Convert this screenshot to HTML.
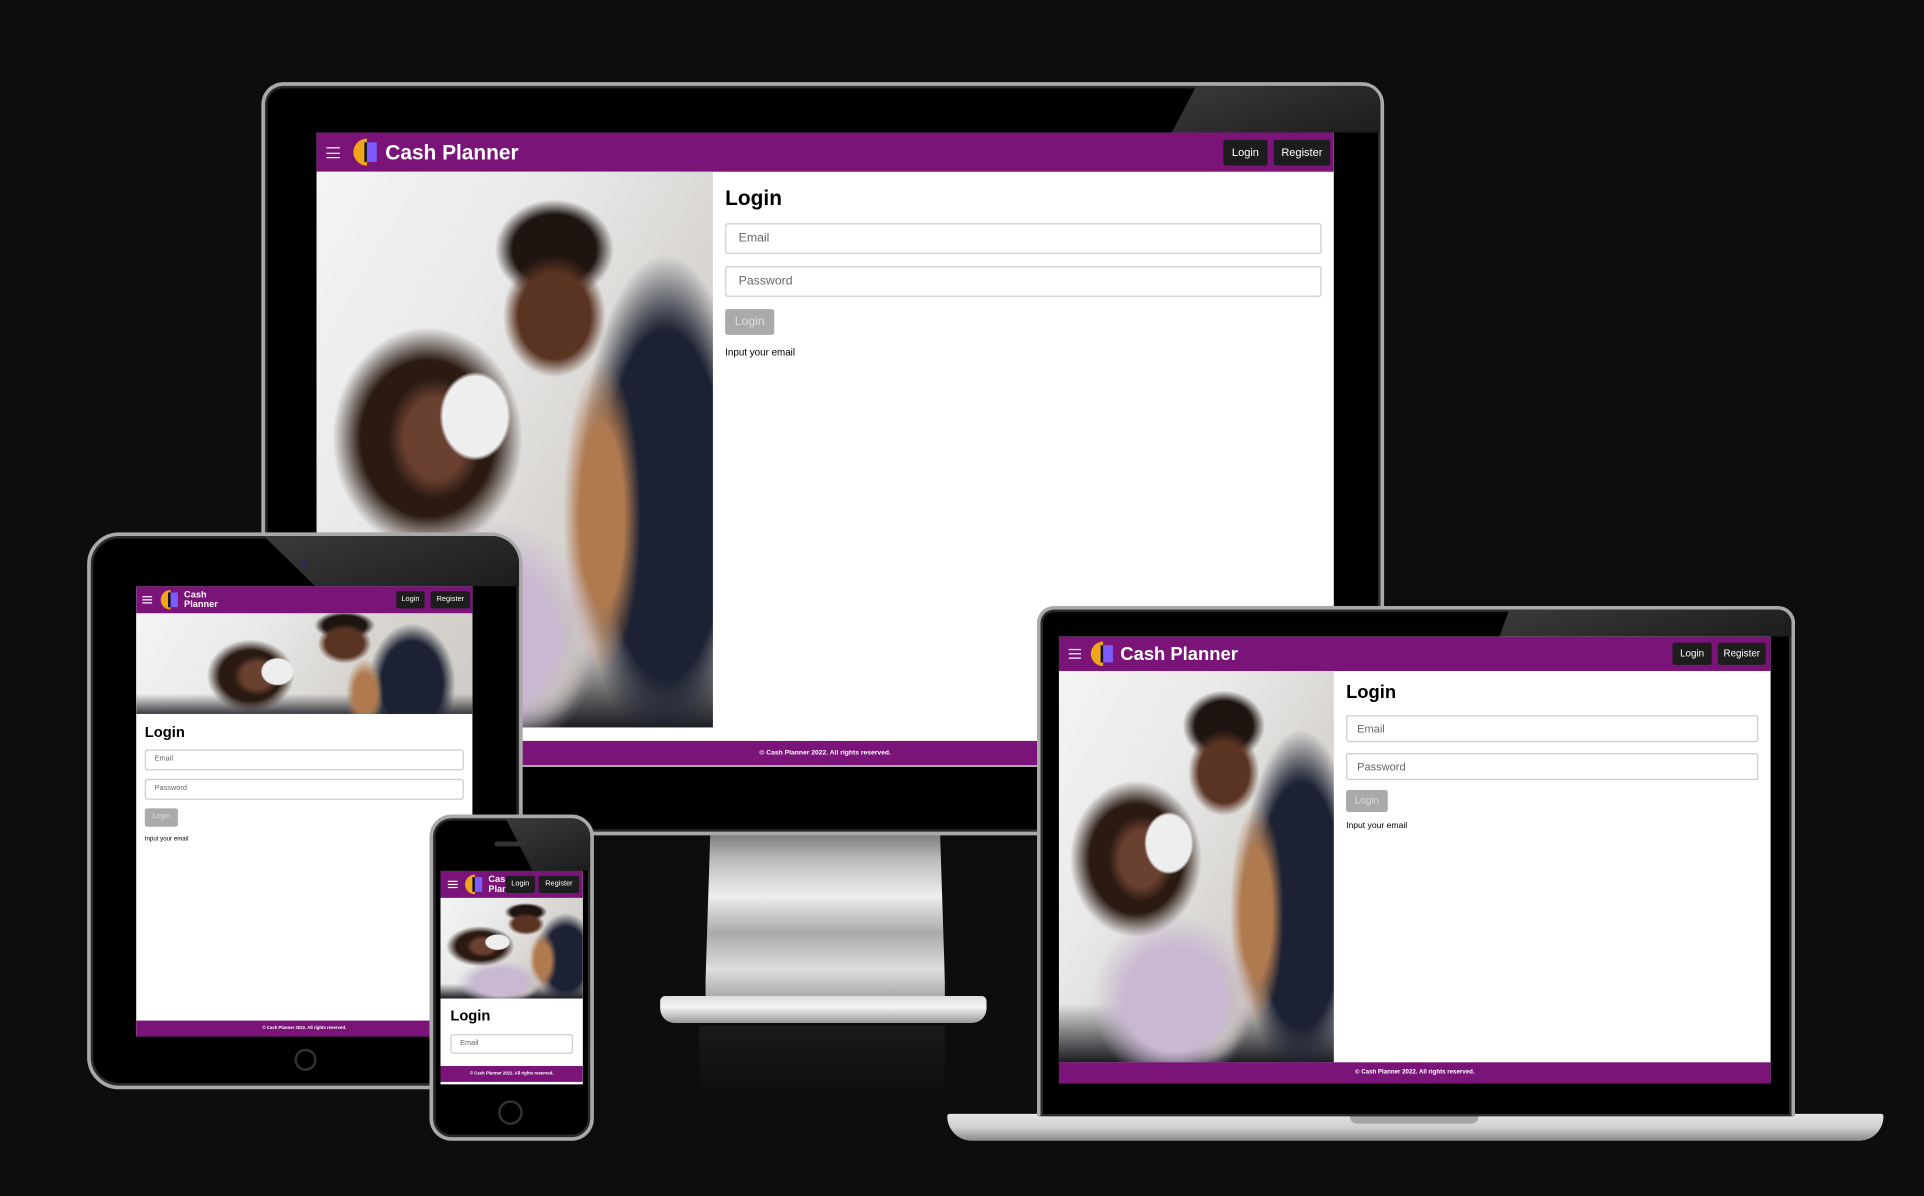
<!DOCTYPE html>
<html><head><meta charset="utf-8"><style>
*{margin:0;padding:0;box-sizing:border-box}
html,body{width:1924px;height:1196px;overflow:hidden;background:#0e0c0d;font-family:"Liberation Sans",Arial,sans-serif}
#c{position:absolute;left:0;top:0;width:1568px;height:975px;transform-origin:0 0;transform:scale(1.22704,1.22667);background:#0e0c0d}
.a{position:absolute}
.dev{position:absolute;background:#000;border:3px solid #a9a9a9;box-shadow:inset 0 0 0 2px #2a2a2a}
.gl{position:absolute;background:linear-gradient(160deg,#3a3a3a,#1c1c1c)}
.scr{position:absolute;background:#fff;overflow:hidden}
.hd{position:absolute;left:0;top:0;right:0;background:#7a1479;color:#fff;font-weight:bold}
.ft{position:absolute;left:0;right:0;bottom:0;background:#7a1479;color:#fff;text-align:center;font-weight:bold}
.photo{position:absolute;overflow:hidden;
background:
radial-gradient(ellipse 9% 8% at 40% 44%,#eee 0 90%,transparent 100%),
radial-gradient(ellipse 13% 11% at 60% 26%,#5a3422 0 70%,transparent 100%),
radial-gradient(ellipse 15% 9% at 60% 14%,#1e1410 0 70%,transparent 100%),
radial-gradient(ellipse 12% 11% at 30% 48%,#6a4030 0 65%,transparent 100%),
radial-gradient(ellipse 24% 20% at 28% 48%,#2a1a12 0 70%,transparent 100%),
radial-gradient(ellipse 30% 22% at 42% 84%,#c9b8d2 0 60%,transparent 100%),
radial-gradient(ellipse 14% 14% at 55% 86%,#c6d0a2 0 60%,transparent 100%),
radial-gradient(ellipse 14% 40% at 72% 62%,#b07a4f 0 40%,transparent 70%),
radial-gradient(ellipse 22% 45% at 88% 60%,#1c2233 0 70%,transparent 100%),
linear-gradient(180deg,rgba(0,0,0,0) 85%,#1c1c22 100%),
linear-gradient(120deg,#f4f4f4 0%,#e9e9e9 35%,#d9d6d2 60%,#cfcac4 100%)}
.photo2{position:absolute;overflow:hidden;
background:
radial-gradient(ellipse 5% 14% at 42% 58%,#eee 0 90%,transparent 100%),
radial-gradient(ellipse 8% 20% at 62% 30%,#5a3422 0 70%,transparent 100%),
radial-gradient(ellipse 9% 14% at 62% 12%,#1e1410 0 70%,transparent 100%),
radial-gradient(ellipse 7% 20% at 36% 62%,#6a4030 0 65%,transparent 100%),
radial-gradient(ellipse 13% 36% at 34% 62%,#2a1a12 0 70%,transparent 100%),
radial-gradient(ellipse 8% 50% at 68% 80%,#b07a4f 0 40%,transparent 70%),
radial-gradient(ellipse 13% 60% at 82% 70%,#1c2233 0 70%,transparent 100%),
linear-gradient(180deg,rgba(0,0,0,0) 80%,#3a3a40 100%),
linear-gradient(120deg,#f4f4f4 0%,#e9e9e9 35%,#d9d6d2 60%,#cfcac4 100%)}
.logo{position:absolute;border-radius:50%;background:linear-gradient(90deg,#f0a51b 50%,transparent 50%)}
.logo i{position:absolute;background:#7c5cff;left:40%;top:15%;width:48%;height:70%;border-left:2px solid #111}
.btn{position:absolute;background:#1d1d1d;color:#fff;border-radius:2px;font-weight:normal;text-align:center}
.inp{position:absolute;border:1px solid #ccc;border-radius:2px;color:#666;background:#fff}
.lb{position:absolute;background:#aaa;color:#ddd;border-radius:2px;text-align:center}
.ham{position:absolute;border-top:1.5px solid #fff;border-bottom:1.5px solid #fff}
.ham:after{content:"";position:absolute;left:0;right:0;top:50%;border-top:1.5px solid #fff;transform:translateY(-50%)}
</style></head><body><div id="c">

<!-- MONITOR -->
<div class="a" style="left:575px;top:678px;width:195px;height:150px;background:linear-gradient(180deg,#777 0%,#bbb 15%,#eee 35%,#aaa 55%,#ddd 75%,#888 100%);clip-path:polygon(2% 0,98% 0,100% 80%,105% 100%,-5% 100%,0 80%)"></div>
<div class="a" style="left:538px;top:812px;width:266px;height:22px;background:linear-gradient(180deg,#ddd,#f4f4f4 40%,#999);border-radius:4px 4px 12px 12px"></div>
<div class="a" style="left:570px;top:836px;width:200px;height:60px;background:linear-gradient(180deg,#1a1a1a,#0e0c0d)"></div>
<div class="dev" style="left:213px;top:67px;width:915px;height:614px;border-radius:18px"></div>
<div class="gl" style="left:955px;top:70px;width:170px;height:38px;clip-path:polygon(20px 0,170px 0,170px 38px,0 38px);border-top-right-radius:14px"></div>
<div class="scr" style="left:258px;top:108px;width:829px;height:517px;">
 <div class="hd" style="height:32px">
  <div class="ham" style="left:8px;top:12px;width:11px;height:9px"></div>
  <div class="logo" style="left:30px;top:5px;width:22px;height:22px"><i></i></div>
  <div class="a" style="left:56px;top:7px;font-size:17px">Cash Planner</div>
  <div class="btn" style="left:739px;top:6px;width:36px;height:21px;font-size:9px;line-height:21px">Login</div>
  <div class="btn" style="left:780px;top:6px;width:46px;height:21px;font-size:9px;line-height:21px">Register</div>
 </div>
 <div class="photo" style="left:0;top:32px;width:323px;height:453px"></div>
 <div class="a" style="left:333px;top:44px;font-size:17px;font-weight:bold">Login</div>
 <div class="inp" style="left:333px;top:74px;width:486px;height:25px;font-size:10px;line-height:23px;padding-left:10px">Email</div>
 <div class="inp" style="left:333px;top:109px;width:486px;height:25px;font-size:10px;line-height:23px;padding-left:10px">Password</div>
 <div class="lb" style="left:333px;top:144px;width:40px;height:21px;font-size:10px;line-height:21px">Login</div>
 <div class="a" style="left:333px;top:175px;font-size:8px">Input your email</div>
 <div class="ft" style="height:20px;bottom:1px;font-size:5.5px;line-height:20px">© Cash Planner 2022. All rights reserved.</div>
</div>

<!-- LAPTOP -->
<div class="a" style="left:772px;top:908px;width:763px;height:22px;background:linear-gradient(180deg,#e6e6e6,#cfcfcf 50%,#8a8a8a);border-radius:2px 2px 20px 20px"></div>
<div class="a" style="left:1100px;top:908px;width:105px;height:8px;background:#a5a5a5;border-radius:0 0 6px 6px"></div>
<div class="dev" style="left:845px;top:494px;width:618px;height:416px;border-radius:14px 14px 0 0;border-bottom:none"></div>
<div class="gl" style="left:1222px;top:497px;width:238px;height:22px;clip-path:polygon(8px 0,238px 0,238px 22px,0 22px);border-top-right-radius:11px"></div>
<div class="scr" style="left:863px;top:519px;width:580px;height:364px">
 <div class="hd" style="height:28px">
  <div class="ham" style="left:8px;top:10px;width:10px;height:8px"></div>
  <div class="logo" style="left:26px;top:4px;width:20px;height:20px"><i></i></div>
  <div class="a" style="left:50px;top:6px;font-size:15px">Cash Planner</div>
  <div class="btn" style="left:500px;top:5px;width:32px;height:18px;font-size:8px;line-height:18px">Login</div>
  <div class="btn" style="left:537px;top:5px;width:39px;height:18px;font-size:8px;line-height:18px">Register</div>
 </div>
 <div class="photo" style="left:0;top:28px;width:224px;height:319px"></div>
 <div class="a" style="left:234px;top:37px;font-size:15px;font-weight:bold">Login</div>
 <div class="inp" style="left:234px;top:64px;width:336px;height:22px;font-size:9px;line-height:20px;padding-left:8px">Email</div>
 <div class="inp" style="left:234px;top:95px;width:336px;height:22px;font-size:9px;line-height:20px;padding-left:8px">Password</div>
 <div class="lb" style="left:234px;top:125px;width:34px;height:18px;font-size:8px;line-height:18px">Login</div>
 <div class="a" style="left:234px;top:151px;font-size:7px">Input your email</div>
 <div class="ft" style="height:17px;font-size:5px;line-height:17px">© Cash Planner 2022. All rights reserved.</div>
</div>

<!-- TABLET -->
<div class="dev" style="left:71px;top:434px;width:355px;height:454px;border-radius:26px"></div>
<div class="gl" style="left:215px;top:437px;width:208px;height:41px;clip-path:polygon(0 0,208px 0,208px 41px,42px 41px);border-top-right-radius:22px"></div>
<div class="a" style="left:240px;top:855px;width:18px;height:18px;border-radius:50%;border:2px solid #333"></div>
<div class="a" style="left:245px;top:456px;width:6px;height:6px;border-radius:50%;background:#2a2a55"></div>
<div class="scr" style="left:111px;top:478px;width:274px;height:367px">
 <div class="hd" style="height:22px">
  <div class="ham" style="left:5px;top:8px;width:8px;height:6px"></div>
  <div class="logo" style="left:20px;top:3px;width:16px;height:16px"><i></i></div>
  <div class="a" style="left:39px;top:3px;font-size:7.5px;line-height:8px">Cash<br>Planner</div>
  <div class="btn" style="left:212px;top:4px;width:23px;height:14px;font-size:6px;line-height:14px">Login</div>
  <div class="btn" style="left:240px;top:4px;width:32px;height:14px;font-size:6px;line-height:14px">Register</div>
 </div>
 <div class="photo2" style="left:0;top:22px;width:274px;height:82px"></div>
 <div class="a" style="left:7px;top:112px;font-size:12px;font-weight:bold">Login</div>
 <div class="inp" style="left:7px;top:133px;width:260px;height:17px;font-size:6px;line-height:15px;padding-left:7px">Email</div>
 <div class="inp" style="left:7px;top:157px;width:260px;height:17px;font-size:6px;line-height:15px;padding-left:7px">Password</div>
 <div class="lb" style="left:7px;top:181px;width:27px;height:15px;font-size:6px;line-height:15px">Login</div>
 <div class="a" style="left:7px;top:203px;font-size:5px">Input your email</div>
 <div class="ft" style="height:13px;font-size:3.5px;line-height:13px">© Cash Planner 2022. All rights reserved.</div>
</div>

<!-- PHONE -->
<div class="dev" style="left:350px;top:664px;width:134px;height:266px;border-radius:18px"></div>
<div class="gl" style="left:412px;top:667px;width:69px;height:43px;clip-path:polygon(0 0,69px 0,69px 43px,22px 43px);border-top-right-radius:15px"></div>
<div class="a" style="left:406px;top:897px;width:20px;height:20px;border-radius:50%;border:2px solid #333"></div>
<div class="a" style="left:403px;top:686px;width:26px;height:4px;border-radius:2px;background:#333"></div>
<div class="scr" style="left:359px;top:710px;width:116px;height:174px">
 <div class="hd" style="height:22px">
  <div class="ham" style="left:6px;top:8px;width:8px;height:6px"></div>
  <div class="logo" style="left:20px;top:3px;width:16px;height:16px"><i></i></div>
  <div class="a" style="left:39px;top:3px;font-size:7.5px;line-height:8px;width:14px;overflow:hidden">Cash<br>Planner</div>
  <div class="btn" style="left:53px;top:4px;width:24px;height:14px;font-size:6px;line-height:14px">Login</div>
  <div class="btn" style="left:80px;top:4px;width:33px;height:14px;font-size:6px;line-height:14px">Register</div>
 </div>
 <div class="photo" style="left:0;top:22px;width:116px;height:82px"></div>
 <div class="a" style="left:8px;top:111px;font-size:12px;font-weight:bold">Login</div>
 <div class="inp" style="left:8px;top:133px;width:100px;height:16px;font-size:6px;line-height:14px;padding-left:7px">Email</div>
 <div class="ft" style="height:13px;bottom:2px;font-size:3.5px;line-height:13px">© Cash Planner 2022. All rights reserved.</div>
</div>

</div></body></html>
